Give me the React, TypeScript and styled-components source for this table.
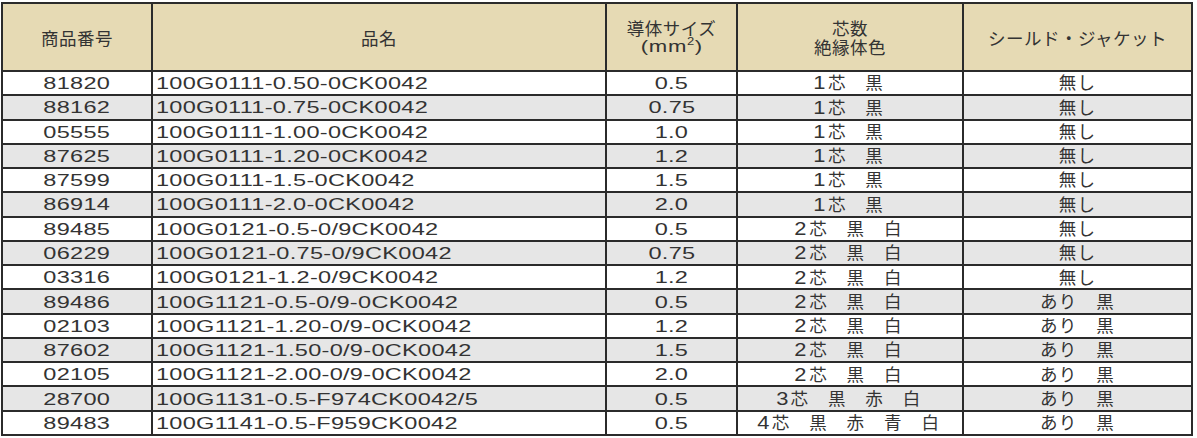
import React from "react";
import styled, { createGlobalStyle } from "styled-components";

const Global = createGlobalStyle`
  html, body { margin: 0; padding: 0; background: #ffffff; }
  body { font-family: "Noto Sans CJK JP", "Liberation Sans", sans-serif; color: #333333; }
`;

const COLS = "150px 454px 131px 226px 229px";
const LINE = "#2b2b2b";

const Page = styled.div`
  padding: 2px 0 0 1px;
`;

const Table = styled.div`
  width: 1192px;
  border-left: 2px solid ${LINE};
  border-top: 2px solid ${LINE};
  box-sizing: border-box;
`;

const Row = styled.div<{ $h: number; $bg: string }>`
  display: grid;
  grid-template-columns: ${COLS};
  height: ${(p) => p.$h}px;
  background: ${(p) => p.$bg};
`;

const HeadCell = styled.div`
  box-sizing: border-box;
  border-right: 2px solid ${LINE};
  border-bottom: 2px solid ${LINE};
  display: flex;
  flex-direction: column;
  align-items: center;
  justify-content: center;
  gap: 1px;
  font-family: "Noto Sans CJK JP", sans-serif;
  font-size: 17.5px;
  line-height: 18px;
  letter-spacing: 0.5px;
  color: #333333;
  text-align: center;
  padding-top: 1px;
`;

const HeadLine = styled.span`
  display: block;
  line-height: 18px;
`;

const HeadLatin = styled.span`
  display: inline-block;
  font-family: "Liberation Sans", sans-serif;
  font-size: 17px;
  line-height: 18px;
  transform: scaleX(1.3);
  sup {
    font-size: 10px;
    vertical-align: 7px;
    line-height: 0;
  }
`;

const Cell = styled.div<{ $align?: "left" | "center"; $cjk?: boolean }>`
  box-sizing: border-box;
  border-right: 2px solid ${LINE};
  border-bottom: 2px solid ${LINE};
  display: flex;
  align-items: center;
  justify-content: ${(p) => (p.$align === "left" ? "flex-start" : "center")};
  padding-left: ${(p) => (p.$align === "left" ? 3 : 0)}px;
  padding-top: 2px;
  white-space: pre;
  overflow: hidden;
  font-family: ${(p) =>
    p.$cjk ? `"Liberation Sans", "Noto Sans CJK JP", sans-serif` : `"Liberation Sans", sans-serif`};
  font-size: ${(p) => (p.$cjk ? 17.5 : 16)}px;
  letter-spacing: ${(p) => (p.$cjk ? 1.2 : 0)}px;
  line-height: 1;
  color: #333333;
`;

const Wide = styled.span<{ $origin: "left" | "center" }>`
  display: inline-block;
  transform: scaleX(1.47);
  transform-origin: ${(p) => p.$origin} center;
  letter-spacing: 0.2px;
`;

const CoreNum = styled.span`
  display: inline-block;
  transform: scaleX(1.25);
  transform-origin: right center;
  margin-right: 1px;
`;

type Item = [string, string, string, string, string];

const rows: Item[] = [
  ["81820", "100G0111-0.50-0CK0042", "0.5", "1芯　黒", "無し"],
  ["88162", "100G0111-0.75-0CK0042", "0.75", "1芯　黒", "無し"],
  ["05555", "100G0111-1.00-0CK0042", "1.0", "1芯　黒", "無し"],
  ["87625", "100G0111-1.20-0CK0042", "1.2", "1芯　黒", "無し"],
  ["87599", "100G0111-1.5-0CK0042", "1.5", "1芯　黒", "無し"],
  ["86914", "100G0111-2.0-0CK0042", "2.0", "1芯　黒", "無し"],
  ["89485", "100G0121-0.5-0/9CK0042", "0.5", "2芯　黒　白", "無し"],
  ["06229", "100G0121-0.75-0/9CK0042", "0.75", "2芯　黒　白", "無し"],
  ["03316", "100G0121-1.2-0/9CK0042", "1.2", "2芯　黒　白", "無し"],
  ["89486", "100G1121-0.5-0/9-0CK0042", "0.5", "2芯　黒　白", "あり　黒"],
  ["02103", "100G1121-1.20-0/9-0CK0042", "1.2", "2芯　黒　白", "あり　黒"],
  ["87602", "100G1121-1.50-0/9-0CK0042", "1.5", "2芯　黒　白", "あり　黒"],
  ["02105", "100G1121-2.00-0/9-0CK0042", "2.0", "2芯　黒　白", "あり　黒"],
  ["28700", "100G1131-0.5-F974CK0042/5", "0.5", "3芯　黒　赤　白", "あり　黒"],
  ["89483", "100G1141-0.5-F959CK0042", "0.5", "4芯　黒　赤　青　白", "あり　黒"],
];

function Cores({ text }: { text: string }) {
  const num = text.charAt(0);
  return (
    <>
      <CoreNum>{num}</CoreNum>
      {text.slice(1)}
    </>
  );
}

export default function App() {
  return (
    <Page>
      <Global />
      <Table>
        <Row $h={68} $bg="#e6dab4">
          <HeadCell>商品番号</HeadCell>
          <HeadCell>品名</HeadCell>
          <HeadCell>
            <HeadLine>導体サイズ</HeadLine>
            <HeadLatin>
              (mm<sup>2</sup>)
            </HeadLatin>
          </HeadCell>
          <HeadCell>
            <HeadLine>芯数</HeadLine>
            <HeadLine>絶縁体色</HeadLine>
          </HeadCell>
          <HeadCell>シールド・ジャケット</HeadCell>
        </Row>
        {rows.map((r, i) => (
          <Row key={r[0]} $h={24.27} $bg={i % 2 === 1 ? "#e6e6e6" : "#ffffff"}>
            <Cell>
              <Wide $origin="center">{r[0]}</Wide>
            </Cell>
            <Cell $align="left">
              <Wide $origin="left">{r[1]}</Wide>
            </Cell>
            <Cell>
              <Wide $origin="center">{r[2]}</Wide>
            </Cell>
            <Cell $cjk>
              <Cores text={r[3]} />
            </Cell>
            <Cell $cjk>{r[4]}</Cell>
          </Row>
        ))}
      </Table>
    </Page>
  );
}
